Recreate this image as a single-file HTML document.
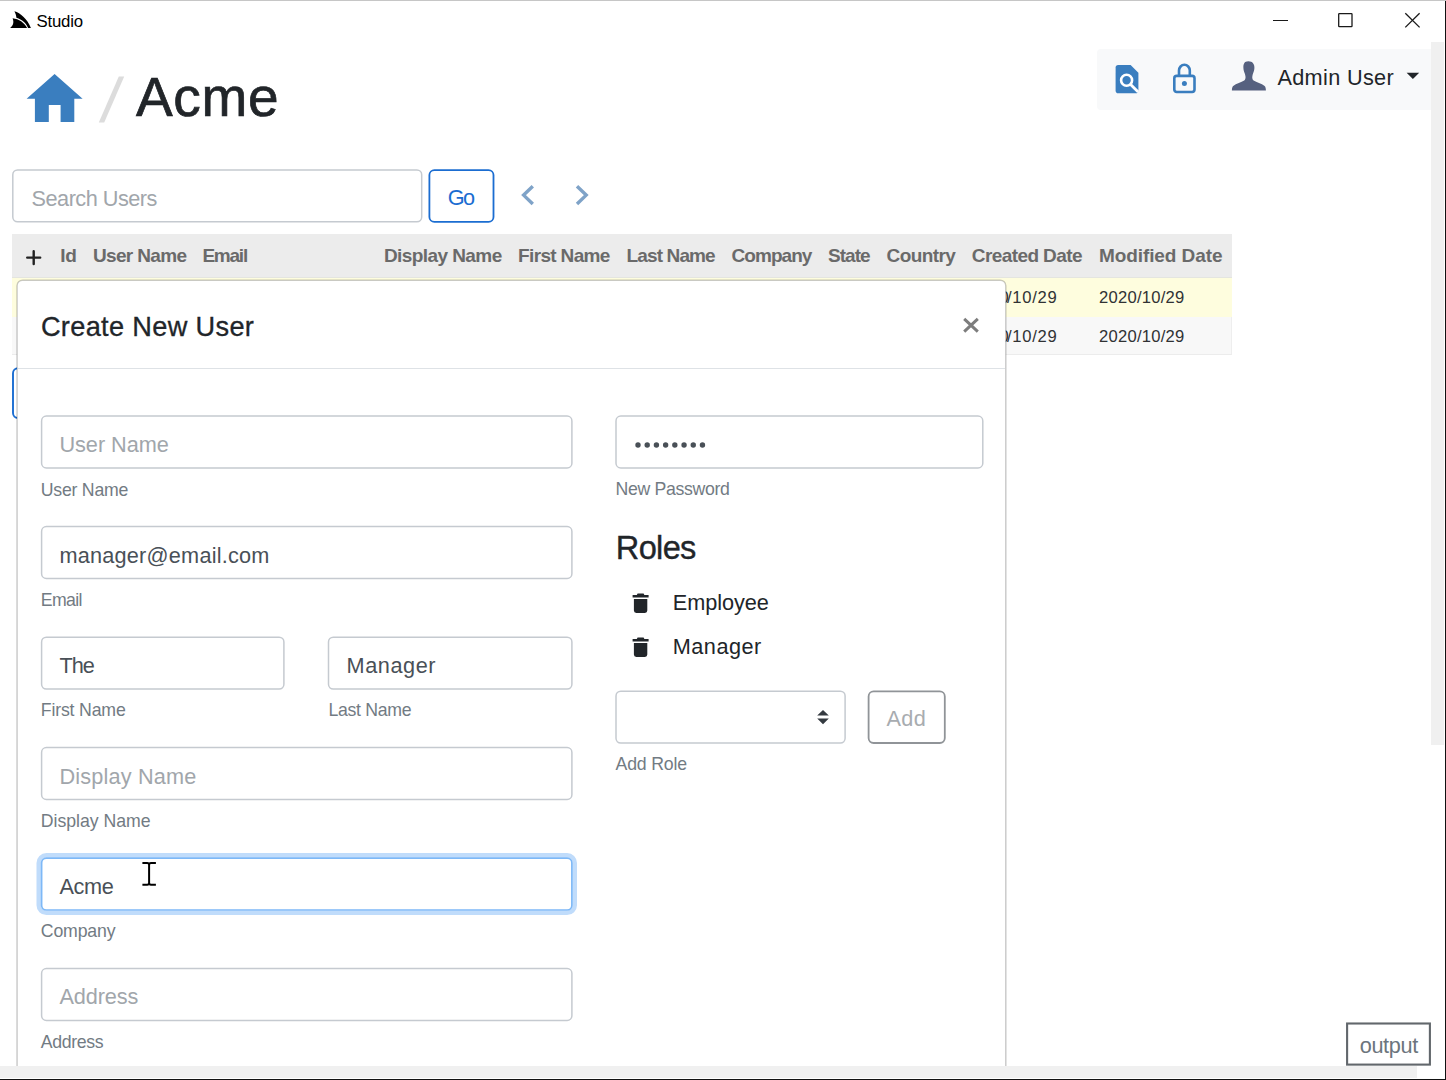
<!DOCTYPE html>
<html><head><meta charset="utf-8"><title>Studio</title>
<style>

html,body{margin:0;padding:0;background:#fff;overflow:hidden;}
body{width:1446px;height:1080px;position:relative;overflow:hidden;font-family:"Liberation Sans",sans-serif;}
.t{position:absolute;white-space:nowrap;line-height:1;font-family:"Liberation Sans",sans-serif;}
.b{position:absolute;box-sizing:border-box;}
svg{position:absolute;overflow:visible;}

</style></head><body>
<div class="b" style="left:0;top:0;width:1446px;height:1px;background:#c6c6c6"></div>
<svg style="left:0px;top:0.4px" width="40" height="40" viewBox="0 0 40 40"><path d="M14.4 11.3 C20.4 13 27.4 19.2 30.9 27.9 L28.1 27.9 C26 22.9 22.3 19.7 16.4 17.7 C16.2 15.4 15.4 13.2 14.4 11.3 Z" fill="#000"/>
<path d="M12.6 18.3 C18.9 19.1 24.3 22.6 27.1 27.9 L10.1 27.9 C13.2 25.6 14.2 22.4 12.6 18.3 Z" fill="#000"/></svg>
<div class="t" style="left:36.60px;top:14px;font-size:16.80px;letter-spacing:-0.240px;color:#000;">Studio</div>
<div class="b" style="left:1273px;top:19.7px;width:14.5px;height:1.3px;background:#1a1a1a"></div>
<svg style="left:1335px;top:10px" width="20" height="20" viewBox="0 0 20 20"><rect x="3.70" y="3.70" width="13.30" height="12.90" rx="0.60" fill="none" stroke="#1a1a1a" stroke-width="1.30"/></svg>
<svg style="left:1405px;top:13px" width="15" height="15" viewBox="0 0 15 15"><path d="M0.3 0.3 L14.6 14.4 M14.6 0.3 L0.3 14.4" stroke="#1a1a1a" stroke-width="1.3" fill="none"/></svg>
<div class="b" style="left:1431px;top:41.5px;width:13px;height:703px;background:#f0f0f0"></div>
<svg style="left:26px;top:73px" width="58" height="50" viewBox="0 0 58 50"><path d="M28.6 0.9 L56.6 25.8 L48.3 25.8 L48.3 49 L34.6 49 L34.6 32 L22.8 32 L22.8 49 L8.9 49 L8.9 25.8 L0.6 25.8 Z" fill="#3a7ebf"/></svg>
<svg style="left:98px;top:75px" width="28" height="50" viewBox="0 0 28 50"><path d="M20.8 1.5 L26.2 1.5 L6.2 47.6 L0.8 47.6 Z" fill="#dcdcdc"/></svg>
<div class="t" style="left:136.00px;top:70px;font-size:55.00px;letter-spacing:0.667px;color:#212529;-webkit-text-stroke:0.7px #212529;">Acme</div>
<div class="b" style="left:1097px;top:49px;width:334px;height:60.5px;background:#f8f9fa;border-radius:4px 0 0 4px"></div>
<svg style="left:1115px;top:64px" width="25" height="30" viewBox="0 0 25 30"><path d="M3.2 0.9 L15.6 0.9 L23.4 8.7 L23.4 26.4 Q23.4 29.2 20.6 29.2 L3.2 29.2 Q0.6 29.2 0.6 26.4 L0.6 3.6 Q0.6 0.9 3.2 0.9 Z" fill="#3a7ebf"/>
<circle cx="11.6" cy="16.2" r="5.5" fill="none" stroke="#fff" stroke-width="2.6"/>
<path d="M15.6 20.4 L23.2 28" stroke="#fff" stroke-width="2.8" fill="none"/></svg>
<svg style="left:1172px;top:62px" width="26" height="33" viewBox="0 0 26 33"><rect x="2.3" y="13.9" width="20.2" height="16.1" rx="2.4" fill="none" stroke="#3a7ebf" stroke-width="2.6"/>
<path d="M7 13.6 L7 8.6 A5.4 5.8 0 0 1 17.8 8.6 L17.8 13.6" fill="none" stroke="#3a7ebf" stroke-width="2.6"/>
<circle cx="12.4" cy="21.6" r="2.5" fill="#3a7ebf"/></svg>
<svg style="left:1231px;top:60px" width="36" height="32" viewBox="0 0 36 32"><path d="M17.4 1.2 C21.6 1.2 23.6 4 23.4 8 C23.3 10 22.8 11.6 22.2 13 C21.8 14 21.6 15 21.4 16 C21 17.8 21.4 19.6 22.6 20.6 C25.4 22.6 30.6 23.6 33.6 26 C34.6 27 34.9 28.6 34.9 30.6 L0.9 30.6 C0.9 28.6 1.2 27 2.2 26 C5.2 23.6 10.4 22.6 13.2 20.6 C14.4 19.6 14.8 17.8 14.4 16 C14.2 15 14 14 13.6 13 C13 11.6 12.5 10 12.4 8 C12.2 4 13.2 1.2 17.4 1.2 Z" fill="#56617f"/></svg>
<div class="t" style="left:1277.40px;top:67px;font-size:21.70px;letter-spacing:0.333px;color:#212529;">Admin User</div>
<svg style="left:1406px;top:72px" width="14" height="8" viewBox="0 0 14 8"><path d="M0.6 0.8 L13.2 0.8 L6.9 7 Z" fill="#212529"/></svg>
<svg style="left:4px;top:161px" width="426" height="69" viewBox="0 0 426 69"><rect x="8.80" y="8.90" width="408.90" height="51.90" rx="4.80" fill="#fff" stroke="#c5cad0" stroke-width="1.50"/></svg>
<div class="t" style="left:31.60px;top:188px;font-size:21.70px;letter-spacing:-0.509px;color:#a1a6ab;">Search Users</div>
<svg style="left:421px;top:162px" width="81" height="68" viewBox="0 0 81 68"><rect x="8.40" y="8.10" width="64.10" height="51.80" rx="5.00" fill="#fff" stroke="#1b6dd1" stroke-width="1.80"/></svg>
<div class="t" style="left:447.80px;top:187px;font-size:21.70px;letter-spacing:-1.700px;color:#1b6dd1;">Go</div>
<svg style="left:520px;top:183px" width="16" height="24" viewBox="0 0 16 24"><path d="M12.8 3.2 L3.6 12.1 L12.8 21" fill="none" stroke="#7fa3c8" stroke-width="3.4"/></svg>
<svg style="left:574px;top:183px" width="16" height="24" viewBox="0 0 16 24"><path d="M3 3.2 L12.2 12.1 L3 21" fill="none" stroke="#7fa3c8" stroke-width="3.4"/></svg>
<div class="b" style="left:12px;top:233.8px;width:1219.8px;height:43.4px;background:#ececec"></div>
<div class="b" style="left:12px;top:277px;width:1219.8px;height:1px;background:#e4e5e0"></div>
<div class="b" style="left:12px;top:278px;width:1219.8px;height:38.5px;background:#fefdde"></div>
<div class="b" style="left:12px;top:316.5px;width:1219.8px;height:38.5px;background:#f8f8f8;border-right:1px solid #eeeeee;border-bottom:1px solid #ececec"></div>
<svg style="left:25px;top:249px" width="18" height="18" viewBox="0 0 18 18"><path d="M8.7 2.2 L8.7 15 M2.2 8.6 L15.2 8.6" stroke="#222" stroke-width="2.4" stroke-linecap="round" fill="none"/></svg>
<div class="t" style="left:60.20px;top:246px;font-size:19.00px;letter-spacing:-0.100px;color:#6a6a6a;font-weight:700;">Id</div>
<div class="t" style="left:93.00px;top:246px;font-size:19.00px;letter-spacing:-0.662px;color:#6a6a6a;font-weight:700;">User Name</div>
<div class="t" style="left:202.40px;top:246px;font-size:19.00px;letter-spacing:-1.225px;color:#6a6a6a;font-weight:700;">Email</div>
<div class="t" style="left:383.90px;top:246px;font-size:19.00px;letter-spacing:-0.573px;color:#6a6a6a;font-weight:700;">Display Name</div>
<div class="t" style="left:518.10px;top:246px;font-size:19.00px;letter-spacing:-0.656px;color:#6a6a6a;font-weight:700;">First Name</div>
<div class="t" style="left:626.60px;top:246px;font-size:19.00px;letter-spacing:-0.875px;color:#6a6a6a;font-weight:700;">Last Name</div>
<div class="t" style="left:731.60px;top:246px;font-size:19.00px;letter-spacing:-0.967px;color:#6a6a6a;font-weight:700;">Company</div>
<div class="t" style="left:828.00px;top:246px;font-size:19.00px;letter-spacing:-0.975px;color:#6a6a6a;font-weight:700;">State</div>
<div class="t" style="left:886.50px;top:246px;font-size:19.00px;letter-spacing:-0.567px;color:#6a6a6a;font-weight:700;">Country</div>
<div class="t" style="left:971.80px;top:246px;font-size:19.00px;letter-spacing:-0.591px;color:#6a6a6a;font-weight:700;">Created Date</div>
<div class="t" style="left:1099.00px;top:246px;font-size:19.00px;letter-spacing:-0.092px;color:#6a6a6a;font-weight:700;">Modified Date</div>
<div class="t" style="left:999.60px;top:290px;font-size:16.60px;letter-spacing:0.000px;color:#303234;">0</div>
<div class="t" style="left:1007.00px;top:290px;font-size:16.60px;letter-spacing:0.720px;color:#303234;">/10/29</div>
<div class="t" style="left:1099.00px;top:290px;font-size:16.60px;letter-spacing:0.244px;color:#303234;">2020/10/29</div>
<div class="t" style="left:999.60px;top:329px;font-size:16.60px;letter-spacing:0.000px;color:#303234;">0</div>
<div class="t" style="left:1007.00px;top:329px;font-size:16.60px;letter-spacing:0.720px;color:#303234;">/10/29</div>
<div class="t" style="left:1099.00px;top:329px;font-size:16.60px;letter-spacing:0.244px;color:#303234;">2020/10/29</div>
<svg style="left:5px;top:360px" width="133" height="66" viewBox="0 0 133 66"><rect x="8.00" y="8.20" width="117.00" height="49.80" rx="5.00" fill="#fff" stroke="#1b6dd1" stroke-width="1.90"/></svg>
<svg style="left:13px;top:276px;overflow:hidden" width="997" height="804" viewBox="0 0 997 804"><rect x="4.06" y="4.20" width="988.74" height="819.80" rx="5.60" fill="#fff" stroke="rgba(0,0,0,0.21)" stroke-width="1.45"/></svg>
<div class="t" style="left:40.90px;top:313px;font-size:27.20px;letter-spacing:0.321px;color:#212529;-webkit-text-stroke:0.3px #212529;">Create New User</div>
<svg style="left:962px;top:317px" width="18" height="18" viewBox="0 0 18 18"><path d="M2.2 1.9 L15.8 14.6 M15.8 1.9 L2.2 14.6" stroke="#7d7d7d" stroke-width="3" fill="none"/></svg>
<div class="b" style="left:17.8px;top:368.1px;width:987.3px;height:1.4px;background:#dee2e6"></div>
<svg style="left:33px;top:408px" width="547" height="68" viewBox="0 0 547 68"><rect x="8.60" y="8.10" width="530.30" height="51.90" rx="4.80" fill="#fff" stroke="#c5cad0" stroke-width="1.50"/></svg>
<div class="t" style="left:59.40px;top:434px;font-size:21.70px;letter-spacing:-0.025px;color:#a1a6ab;">User Name</div>
<div class="t" style="left:40.80px;top:482px;font-size:17.70px;letter-spacing:-0.237px;color:#727b83;">User Name</div>
<svg style="left:33px;top:518px" width="547" height="69" viewBox="0 0 547 69"><rect x="8.60" y="8.60" width="530.30" height="51.90" rx="4.80" fill="#fff" stroke="#c5cad0" stroke-width="1.50"/></svg>
<div class="t" style="left:59.40px;top:545px;font-size:21.70px;letter-spacing:0.225px;color:#495057;">manager@email.com</div>
<div class="t" style="left:40.80px;top:592px;font-size:17.70px;letter-spacing:-0.675px;color:#727b83;">Email</div>
<svg style="left:33px;top:629px" width="259" height="69" viewBox="0 0 259 69"><rect x="8.60" y="8.20" width="242.30" height="51.90" rx="4.80" fill="#fff" stroke="#c5cad0" stroke-width="1.50"/></svg>
<div class="t" style="left:59.40px;top:655px;font-size:21.70px;letter-spacing:-1.000px;color:#495057;">The</div>
<div class="t" style="left:40.80px;top:702px;font-size:17.70px;letter-spacing:-0.167px;color:#727b83;">First Name</div>
<svg style="left:320px;top:629px" width="260" height="69" viewBox="0 0 260 69"><rect x="8.50" y="8.20" width="243.40" height="51.90" rx="4.80" fill="#fff" stroke="#c5cad0" stroke-width="1.50"/></svg>
<div class="t" style="left:346.60px;top:655px;font-size:21.70px;letter-spacing:0.567px;color:#495057;">Manager</div>
<div class="t" style="left:328.40px;top:702px;font-size:17.70px;letter-spacing:-0.300px;color:#727b83;">Last Name</div>
<svg style="left:33px;top:739px" width="547" height="69" viewBox="0 0 547 69"><rect x="8.60" y="8.60" width="530.30" height="51.90" rx="4.80" fill="#fff" stroke="#c5cad0" stroke-width="1.50"/></svg>
<div class="t" style="left:59.40px;top:766px;font-size:21.70px;letter-spacing:0.173px;color:#a1a6ab;">Display Name</div>
<div class="t" style="left:40.80px;top:813px;font-size:17.70px;letter-spacing:-0.036px;color:#727b83;">Display Name</div>
<svg style="left:30px;top:847px" width="553" height="74" viewBox="0 0 553 74"><rect x="8.70" y="8.20" width="536.10" height="57.70" rx="7.70" fill="none" stroke="#c0dcfb" stroke-width="4.40"/></svg>
<svg style="left:33px;top:850px" width="547" height="68" viewBox="0 0 547 68"><rect x="8.60" y="8.10" width="530.30" height="51.90" rx="4.80" fill="#fff" stroke="#7db8f7" stroke-width="1.70"/></svg>
<div class="t" style="left:59.40px;top:876px;font-size:21.70px;letter-spacing:-0.300px;color:#495057;">Acme</div>
<div class="t" style="left:40.80px;top:923px;font-size:17.70px;letter-spacing:-0.167px;color:#727b83;">Company</div>
<svg style="left:33px;top:960px" width="547" height="69" viewBox="0 0 547 69"><rect x="8.60" y="8.50" width="530.30" height="51.90" rx="4.80" fill="#fff" stroke="#c5cad0" stroke-width="1.50"/></svg>
<div class="t" style="left:59.40px;top:986px;font-size:21.70px;letter-spacing:-0.100px;color:#a1a6ab;">Address</div>
<div class="t" style="left:40.80px;top:1034px;font-size:17.70px;letter-spacing:-0.350px;color:#727b83;">Address</div>
<svg style="left:142px;top:861px" width="15" height="26" viewBox="0 0 15 26"><path d="M0.4 2 L5.2 2 Q7.1 2 7.1 3.8 L7.1 22 Q7.1 23.8 5.2 23.8 L0.4 23.8 M13.9 2 L9 2 Q7.1 2 7.1 3.8 M7.1 22 Q7.1 23.8 9 23.8 L13.9 23.8" stroke="#000" stroke-width="2" fill="none"/></svg>
<svg style="left:608px;top:408px" width="383" height="68" viewBox="0 0 383 68"><rect x="8.00" y="8.10" width="366.80" height="51.90" rx="4.80" fill="#fff" stroke="#c5cad0" stroke-width="1.50"/></svg>
<svg style="left:634px;top:441.1px" width="75" height="8" viewBox="0 0 75 8"><circle cx="4.00" cy="4" r="2.7" fill="#495057"/><circle cx="13.21" cy="4" r="2.7" fill="#495057"/><circle cx="22.42" cy="4" r="2.7" fill="#495057"/><circle cx="31.63" cy="4" r="2.7" fill="#495057"/><circle cx="40.84" cy="4" r="2.7" fill="#495057"/><circle cx="50.05" cy="4" r="2.7" fill="#495057"/><circle cx="59.26" cy="4" r="2.7" fill="#495057"/><circle cx="68.47" cy="4" r="2.7" fill="#495057"/></svg>
<div class="t" style="left:615.60px;top:481px;font-size:17.70px;letter-spacing:-0.327px;color:#727b83;">New Password</div>
<div class="t" style="left:615.80px;top:532px;font-size:32.60px;letter-spacing:-0.675px;color:#212529;-webkit-text-stroke:0.35px #212529;">Roles</div>
<svg style="left:632px;top:592.8px" width="18" height="21" viewBox="0 0 18 21"><path d="M5.6 0.6 L11.6 0.6 L12.4 1.9 L16.6 1.9 L16.6 4.4 L0.6 4.4 L0.6 1.9 L4.8 1.9 Z M1.9 5.9 L15.3 5.9 L15.3 17.6 Q15.3 20 12.9 20 L4.3 20 Q1.9 20 1.9 17.6 Z" fill="#212529"/></svg>
<div class="t" style="left:672.80px;top:592px;font-size:21.70px;letter-spacing:-0.043px;color:#212529;">Employee</div>
<svg style="left:632px;top:637.4px" width="18" height="21" viewBox="0 0 18 21"><path d="M5.6 0.6 L11.6 0.6 L12.4 1.9 L16.6 1.9 L16.6 4.4 L0.6 4.4 L0.6 1.9 L4.8 1.9 Z M1.9 5.9 L15.3 5.9 L15.3 17.6 Q15.3 20 12.9 20 L4.3 20 Q1.9 20 1.9 17.6 Z" fill="#212529"/></svg>
<div class="t" style="left:672.80px;top:636px;font-size:21.70px;letter-spacing:0.467px;color:#212529;">Manager</div>
<svg style="left:608px;top:683px" width="246" height="69" viewBox="0 0 246 69"><rect x="8.00" y="8.20" width="229.10" height="51.90" rx="4.80" fill="#fff" stroke="#c5cad0" stroke-width="1.50"/></svg>
<svg style="left:816px;top:709px" width="14" height="17" viewBox="0 0 14 17"><path d="M1.2 6.6 L7 1 L12.8 6.6 Z M1.2 9.6 L12.8 9.6 L7 15.2 Z" fill="#343a40"/></svg>
<svg style="left:860px;top:683px" width="93" height="68" viewBox="0 0 93 68"><rect x="8.60" y="8.40" width="76.20" height="51.60" rx="5.00" fill="#fff" stroke="#909498" stroke-width="1.80"/></svg>
<div class="t" style="left:886.40px;top:708px;font-size:21.70px;letter-spacing:0.450px;color:#a8acb0;">Add</div>
<div class="t" style="left:615.60px;top:756px;font-size:17.70px;letter-spacing:-0.186px;color:#727b83;">Add Role</div>
<svg style="left:1344px;top:1020px" width="89" height="48" viewBox="0 0 89 48"><rect x="3.10" y="3.50" width="82.80" height="41.10" rx="0.00" fill="#fff" stroke="#62676c" stroke-width="2.10"/></svg>
<div class="t" style="left:1359.70px;top:1035px;font-size:21.70px;letter-spacing:-0.360px;color:#6c757d;">output</div>
<div class="b" style="left:0;top:1065.8px;width:1446px;height:14.2px;background:#fff"></div>
<div class="b" style="left:0;top:1065.8px;width:1417.2px;height:12px;background:#f0f0f0"></div>
<div class="b" style="left:0;top:1078.7px;width:1446px;height:1.3px;background:#111"></div>
<div class="b" style="left:1444.6px;top:1px;width:1.4px;height:1079px;background:#111"></div>
</body></html>
